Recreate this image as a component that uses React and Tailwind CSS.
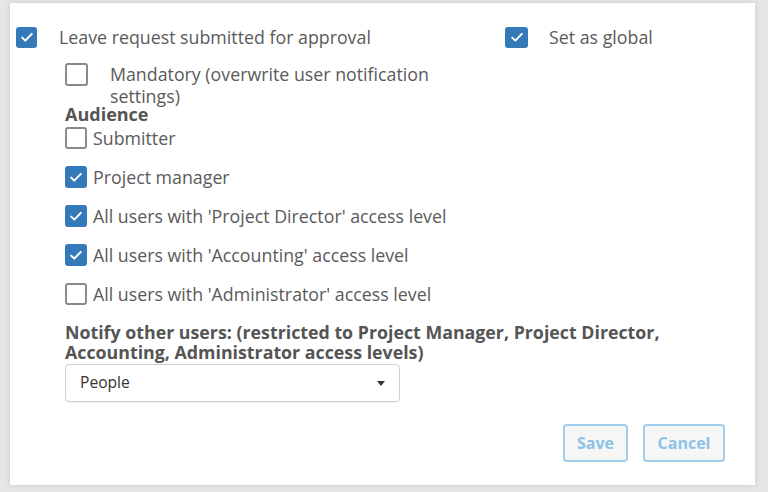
const font = { fontFamily: '"Open Sans", "Noto Sans", sans-serif' };

const Check = ({ checked, size = "w-[22px] h-[22px]" }) =>
  checked ? (
    <span className={`${size} shrink-0 rounded-[3px] bg-[#3479b8] flex items-center justify-center`}>
      <svg viewBox="0 0 16 16" className="w-[16px] h-[16px]" fill="none" stroke="white" strokeWidth="2" strokeLinecap="round" strokeLinejoin="round">
        <path d="M3.2 8.6l3.1 3L12.8 4.9" />
      </svg>
    </span>
  ) : (
    <span className={`${size} shrink-0 rounded-[3px] border-2 border-[#8a8a8a] bg-white`} />
  );

const audience = [
  { label: "Submitter", checked: false },
  { label: "Project manager", checked: true },
  { label: "All users with 'Project Director' access level", checked: true },
  { label: "All users with 'Accounting' access level", checked: true },
  { label: "All users with 'Administrator' access level", checked: false },
];

export default function App() {
  return (
    <div className="w-[768px] h-[492px] bg-[#e6e6e6] pl-[10px] pt-[3px] pr-[13px] pb-[7px]" style={font}>
      <div className="h-full bg-white shadow-[0_0_6px_rgba(0,0,0,0.12)] text-[#5a5a5a]">
        {/* top row */}
        <div className="flex pt-[23px]">
          <label className="w-[495px] pl-[6px] flex items-center gap-[22px] text-[17.8px] leading-[22px]">
            <Check checked size="w-[21px] h-[21px]" />
            <span>Leave request submitted for approval</span>
          </label>
          <label className="flex items-center gap-[21px] text-[17.8px] leading-[22px]">
            <Check checked size="w-[23px] h-[21px]" />
            <span>Set as global</span>
          </label>
        </div>

        <div className="pl-[55px]">
          <label className="flex items-start gap-[22px] mt-[15px] text-[17.8px] leading-[22px]">
            <Check checked={false} size="w-[23px] h-[23px]" />
            <span className="w-[340px]">Mandatory (overwrite user notification settings)</span>
          </label>

          <div className="font-bold text-[18px] leading-[20px] mt-[-3px] text-[#555]">Audience</div>

          <div className="mt-[3px] flex flex-col gap-[17px]">
            {audience.map((item) => (
              <label key={item.label} className="flex items-center gap-[6px] h-[22px] text-[17.8px]">
                <Check checked={item.checked} />
                <span>{item.label}</span>
              </label>
            ))}
          </div>

          <div className="mt-[17px] font-bold text-[17.8px] leading-[20px] text-[#555]">
            Notify other users: (restricted to Project Manager, Project Director,
            <br />
            Accounting, Administrator access levels)
          </div>

          <div className="mt-[2px] w-[335px] h-[38px] border border-[#cfcfcf] rounded-[4px] flex items-center justify-between pl-[14px] pr-[14px] text-[15.6px] text-[#333] shadow-[0_1px_1px_rgba(0,0,0,0.05)]">
            <span>People</span>
            <span className="w-0 h-0 border-l-[4px] border-r-[4px] border-t-[5px] border-l-transparent border-r-transparent border-t-[#333]" />
          </div>
        </div>

        <div className="flex justify-end gap-[15px] pr-[30px] mt-[22px]">
          <button className="w-[65px] h-[38px] rounded-[4px] border-2 border-[#9fcdee] bg-[#f6f6f6] text-[#8dc2e7] font-bold text-[16px]">
            Save
          </button>
          <button className="w-[82px] h-[38px] rounded-[4px] border-2 border-[#9fcdee] bg-[#f6f6f6] text-[#8dc2e7] font-bold text-[16px]">
            Cancel
          </button>
        </div>
      </div>
    </div>
  );
}
